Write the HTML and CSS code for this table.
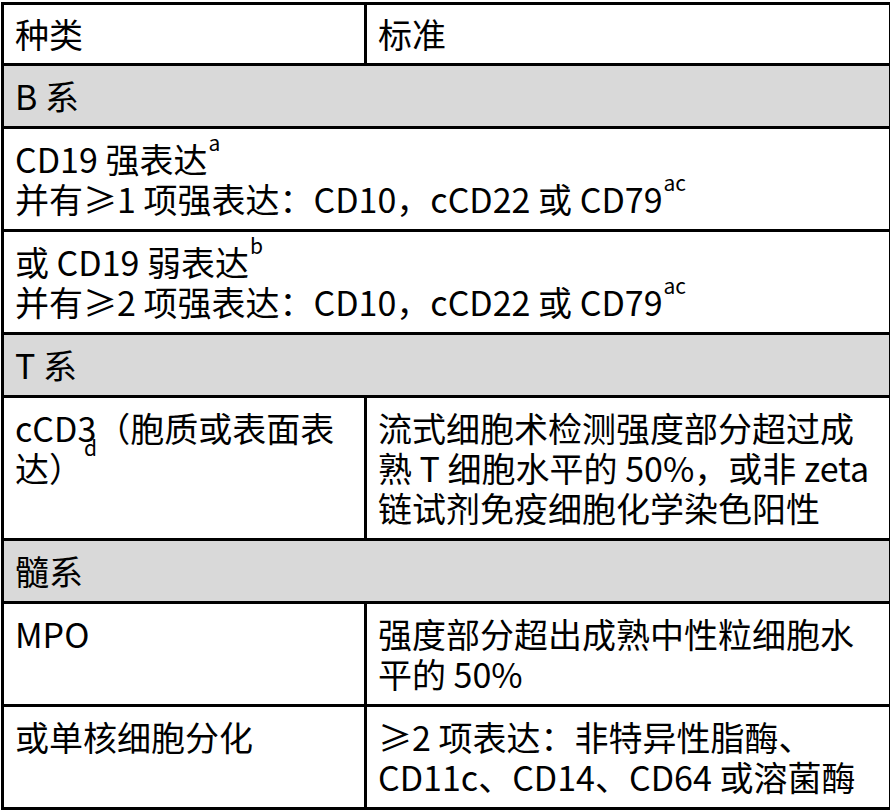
FILE: index.html
```html
<!DOCTYPE html>
<html lang="zh-CN">
<head>
<meta charset="utf-8">
<title>种类与标准</title>
<link rel="stylesheet" href="styles.css">
</head>
<body>
<table class="crit">
  <colgroup>
    <col class="c1">
    <col class="c2">
  </colgroup>
  <tr class="head">
    <td>种类</td>
    <td>标准</td>
  </tr>
  <tr class="group">
    <td colspan="2">B 系</td>
  </tr>
  <tr>
    <td colspan="2">CD19 强表达<sup>a</sup><br>并有≥1 项强表达：CD10，cCD22 或 CD79<sup>ac</sup></td>
  </tr>
  <tr>
    <td colspan="2">或 CD19 弱表达<sup>b</sup><br>并有≥2 项强表达：CD10，cCD22 或 CD79<sup>ac</sup></td>
  </tr>
  <tr class="group">
    <td colspan="2">T 系</td>
  </tr>
  <tr>
    <td>cCD3（胞质或表面表<br>达）<sup class="sup-hi">d</sup></td>
    <td>流式细胞术检测强度部分超过成<br>熟 T 细胞水平的 50%，或非 zeta<br>链试剂免疫细胞化学染色阳性</td>
  </tr>
  <tr class="group">
    <td colspan="2">髓系</td>
  </tr>
  <tr>
    <td>MPO</td>
    <td>强度部分超出成熟中性粒细胞水<br>平的 50%</td>
  </tr>
  <tr>
    <td>或单核细胞分化</td>
    <td>≥2 项表达：非特异性脂酶、<br>CD11c、CD14、CD64 或溶菌酶</td>
  </tr>
</table>
</body>
</html>
```

FILE: styles.css
```css
html, body {
  margin: 0;
  padding: 0;
  background: #ffffff;
}

.crit {
  margin: 2px 0 0 1px;
  width: 888px;
  border-collapse: collapse;
  table-layout: fixed;
  font-family: "Noto Sans CJK SC", "Noto Sans", sans-serif;
  font-size: 34px;
  line-height: 40px;
  color: #000000;
}

.c1 { width: 363px; }
.c2 { width: 525px; }

.crit td {
  border: 3px solid #000000;
  padding: 10px 6px 10px 11px;
  vertical-align: top;
  white-space: nowrap;
}

.crit .head td {
  padding-top: 9px;
  padding-bottom: 9px;
}

.crit .group td {
  background: #d9d9d9;
}

.crit sup {
  font-size: 21px;
  line-height: 0;
  vertical-align: 0;
  position: relative;
  top: -22px;
  margin-left: 1px;
}

.crit sup.sup-hi {
  top: -26px;
}
```
